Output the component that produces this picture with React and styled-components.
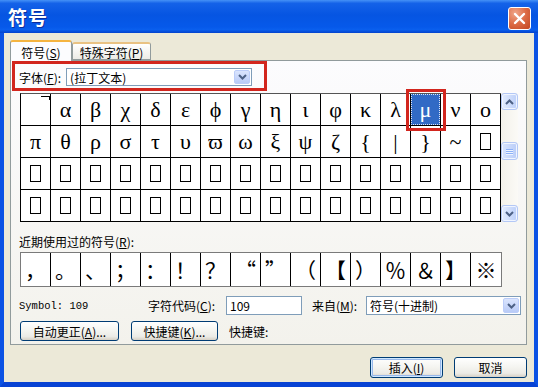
import React from "react";
import styled, { createGlobalStyle } from "styled-components";

const GlobalStyle = createGlobalStyle`
  html, body { margin: 0; padding: 0; background: #fff; }
  body {
    font-family: "Noto Sans CJK SC", "Noto Sans", sans-serif;
    font-size: 12px;
    color: #000;
  }
  * { box-sizing: border-box; }
`;

const row1 = ["macron", "α", "β", "χ", "δ", "ε", "ϕ", "γ", "η", "ι", "φ", "κ", "λ", "μ", "ν", "ο"];
const row2 = ["π", "θ", "ρ", "σ", "τ", "υ", "ϖ", "ω", "ξ", "ψ", "ζ", "{", "|", "}", "~", null];
const blanks = Array(32).fill(null);
const cells = [...row1, ...row2, ...blanks];
const recent = ["，", "。", "、", "；", "：", "！", "？", "“", "”", "（", "【", "）", "％", "＆", "】", "※"];

const Chevron = ({ up }) => (
  <svg width="9" height="6" viewBox="0 0 9 6">
    <path
      d={up ? "M1 5 L4.5 1.5 L8 5" : "M1 1 L4.5 4.5 L8 1"}
      fill="none"
      stroke="#4D6185"
      strokeWidth="2"
    />
  </svg>
);

const App = () => {
  return (
    <>
      <GlobalStyle />
      <Window>
        <TitleBar>
          <Title>符号</Title>
          <CloseButton>
            <svg width="13" height="13" viewBox="0 0 13 13">
              <path d="M2 2 L11 11 M11 2 L2 11" stroke="#fff" strokeWidth="2.4" strokeLinecap="round" />
            </svg>
          </CloseButton>
        </TitleBar>
        <Frame>
          <Body>
            <TabRow>
              <Tab $active $w={62}>
                符号(<u>S</u>)
              </Tab>
              <Tab $w={79}>
                特殊字符(<u>P</u>)
              </Tab>
            </TabRow>
            <Panel>
              <FontBox>
                <Label>
                  字体(<u>F</u>):
                </Label>
                <Select $w={186} $h={18}>
                  <span>(拉丁文本)</span>
                  <DropButton>
                    <Chevron />
                  </DropButton>
                </Select>
              </FontBox>

              <CharArea>
                <CharGrid>
                  {cells.map((c, i) => (
                    <CharCell key={i} $selected={c === "μ"}>
                      {c === "macron" ? (
                        <MacronCell>
                          <Macron />
                        </MacronCell>
                      ) : c === "μ" ? (
                        <FocusRing>μ</FocusRing>
                      ) : c ? (
                        c
                      ) : (
                        <MissingGlyph />
                      )}
                    </CharCell>
                  ))}
                </CharGrid>
                <ScrollBar>
                  <ScrollButton>
                    <Chevron up />
                  </ScrollButton>
                  <TrackGap $h={32} />
                  <Thumb>
                    <Grip />
                    <Grip />
                    <Grip />
                  </Thumb>
                  <TrackGap $grow />
                  <ScrollButton>
                    <Chevron />
                  </ScrollButton>
                </ScrollBar>
              </CharArea>

              <SectionLabel>
                近期使用过的符号(<u>R</u>):
              </SectionLabel>
              <RecentBox>
                {recent.map((c, i) => (
                  <RecentCell key={i}>{c}</RecentCell>
                ))}
              </RecentBox>

              <InfoRow>
                <SymbolName>Symbol: 109</SymbolName>
                <Label $w={76}>
                  字符代码(<u>C</u>):
                </Label>
                <CodeInput>109</CodeInput>
                <Label $w={52} $ml={10}>
                  来自(<u>M</u>):
                </Label>
                <Select $w={155} $h={19}>
                  <span>符号(十进制)</span>
                  <DropButton>
                    <Chevron />
                  </DropButton>
                </Select>
              </InfoRow>

              <ButtonRow>
                <XPButton $w={99}>
                  自动更正(<u>A</u>)...
                </XPButton>
                <XPButton $w={87}>
                  快捷键(<u>K</u>)...
                </XPButton>
                <ShortcutText>快捷键:</ShortcutText>
              </ButtonRow>
            </Panel>

            <Footer>
              <XPButton $w={73} $h={21} $focus>
                插入(<u>I</u>)
              </XPButton>
              <XPButton $w={73} $h={21}>
                取消
              </XPButton>
            </Footer>
          </Body>
        </Frame>
      </Window>
    </>
  );
};

export default App;

const Window = styled.div`
  width: 538px;
  height: 387px;
  display: flex;
  flex-direction: column;
  overflow: hidden;
`;

const TitleBar = styled.div`
  height: 33px;
  flex: none;
  display: flex;
  align-items: center;
  justify-content: space-between;
  padding: 0 7px 0 8px;
  background: linear-gradient(
    to bottom,
    #4592f7 0%,
    #1462e8 10%,
    #0655e2 45%,
    #0659ea 82%,
    #0a5fee 90%,
    #0342cc 100%
  );
`;

const Title = styled.span`
  color: #fff;
  font-size: 19px;
  font-weight: bold;
  letter-spacing: 1px;
  text-shadow: 1px 1px 0 #0c2e9c;
`;

const CloseButton = styled.div`
  width: 23px;
  height: 23px;
  margin-top: 3px;
  border: 1px solid #fff;
  border-radius: 3px;
  background: radial-gradient(circle at 30% 25%, #f0a68a 0%, #dc6b45 50%, #c2451f 100%);
  display: flex;
  align-items: center;
  justify-content: center;
`;

const Frame = styled.div`
  flex: 1;
  display: flex;
  border-left: 4px solid #0b52e4;
  border-right: 4px solid #0b52e4;
  border-bottom: 5px solid #0843d4;
`;

const Body = styled.div`
  flex: 1;
  background: #ece9d8;
  padding: 7px 7px 0 6px;
  display: flex;
  flex-direction: column;
`;

const TabRow = styled.div`
  height: 20px;
  display: flex;
  align-items: flex-end;
`;

const Tab = styled.div`
  position: relative;
  z-index: ${(p) => (p.$active ? 2 : 1)};
  width: ${(p) => p.$w}px;
  height: ${(p) => (p.$active ? 21 : 18)}px;
  margin-bottom: ${(p) => (p.$active ? -1 : 0)}px;
  display: flex;
  align-items: center;
  justify-content: center;
  padding-top: 1px;
  border: 1px solid #919b9c;
  border-top: 2px solid ${(p) => (p.$active ? "#f5b440" : "#e9c283")};
  border-bottom: ${(p) => (p.$active ? "none" : "1px solid #919b9c")};
  border-radius: 3px 3px 0 0;
  background: ${(p) =>
    p.$active ? "#fcfcfe" : "linear-gradient(to bottom, #ffffff, #ecebe6)"};
`;

const Panel = styled.div`
  height: 285px;
  border: 1px solid #919b9c;
  background: linear-gradient(to bottom, #fcfcfe, #f3f2ec);
  padding-left: 1px;
  display: flex;
  flex-direction: column;
  align-items: flex-start;
`;

const FontBox = styled.div`
  width: 255px;
  height: 30px;
  border: 3px solid #d2261e;
  display: flex;
  align-items: center;
  gap: 3px;
  padding: 2px 0 0 4px;
`;

const Label = styled.span`
  flex: none;
  width: ${(p) => (p.$w ? `${p.$w}px` : "auto")};
  margin-left: ${(p) => p.$ml || 0}px;
  white-space: nowrap;
`;

const Select = styled.div`
  flex: none;
  width: ${(p) => p.$w}px;
  height: ${(p) => p.$h}px;
  margin-left: 2px;
  border: 1px solid #7f9db9;
  background: #fff;
  display: flex;
  align-items: center;
  justify-content: space-between;
  padding: 0 1px 0 3px;
  white-space: nowrap;
`;

const DropButton = styled.div`
  width: 16px;
  height: calc(100% - 2px);
  border: 1px solid #bccdf9;
  border-radius: 2px;
  background: linear-gradient(to bottom, #dbe5fd, #b9cbf7);
  display: flex;
  align-items: center;
  justify-content: center;
`;

const CharArea = styled.div`
  display: flex;
  margin: 2px 0 0 8px;
`;

const CharGrid = styled.div`
  display: grid;
  grid-template-columns: repeat(16, 30px);
  grid-auto-rows: 32px;
  border-top: 1px solid #555;
  border-left: 1px solid #000;
  background: #fff;
`;

const CharCell = styled.div`
  position: relative;
  z-index: ${(p) => (p.$selected ? 1 : 0)};
  display: flex;
  align-items: center;
  justify-content: center;
  border-right: 1px solid #000;
  border-bottom: 1px solid #000;
  font-family: "Liberation Serif", "DejaVu Serif", serif;
  font-size: 22px;
  line-height: 1;
  background: ${(p) => (p.$selected ? "#316ac5" : "#fff")};
  color: ${(p) => (p.$selected ? "#fff" : "#000")};
  outline: ${(p) => (p.$selected ? "3px solid #d2261e" : "none")};
  outline-offset: 2px;
`;

const FocusRing = styled.span`
  width: 100%;
  height: 100%;
  display: flex;
  align-items: center;
  justify-content: center;
  border: 1px dotted #dfe6f5;
`;

const MacronCell = styled.span`
  width: 100%;
  height: 100%;
  display: flex;
  justify-content: flex-end;
  align-items: flex-start;
  padding-top: 2px;
`;

const Macron = styled.span`
  width: 9px;
  height: 4px;
  border-top: 1px solid #000;
  border-right: 1px solid #000;
`;

const MissingGlyph = styled.span`
  width: 11px;
  height: 17px;
  border: 1px solid #000;
`;

const ScrollBar = styled.div`
  width: 17px;
  display: flex;
  flex-direction: column;
  background: linear-gradient(to right, #f3f1ea, #fbfaf6);
`;

const ScrollButton = styled.div`
  height: 17px;
  flex: none;
  border: 1px solid #b4c8f6;
  border-radius: 3px;
  background: linear-gradient(to right, #e2ebfe, #bdd0f9);
  box-shadow: inset 0 0 0 1px #f0f5ff;
  display: flex;
  align-items: center;
  justify-content: center;
`;

const TrackGap = styled.div`
  flex: ${(p) => (p.$grow ? 1 : "none")};
  height: ${(p) => (p.$h ? `${p.$h}px` : "auto")};
`;

const Thumb = styled.div`
  height: 18px;
  flex: none;
  border: 1px solid #b4c8f6;
  border-radius: 3px;
  background: linear-gradient(to right, #d8e4fe, #bacdf8);
  box-shadow: inset 0 0 0 1px #f0f5ff;
  display: flex;
  flex-direction: column;
  align-items: center;
  justify-content: center;
  gap: 1px;
`;

const Grip = styled.span`
  width: 7px;
  height: 1px;
  background: #8cb0f8;
  box-shadow: 0 1px 0 #eef4fe;
`;

const SectionLabel = styled.div`
  margin: 11px 0 0 7px;
  height: 18px;
  line-height: 18px;
`;

const RecentBox = styled.div`
  display: grid;
  grid-template-columns: repeat(16, 30px);
  height: 35px;
  margin: 1px 0 0 8px;
  border: 1px solid #7a7a7a;
  background: #fff;
`;

const RecentCell = styled.div`
  display: flex;
  align-items: center;
  justify-content: center;
  border-right: 1px solid #000;
  font-family: "Noto Sans CJK SC", sans-serif;
  font-size: 21px;
  line-height: 1;

  &:last-child {
    border-right: none;
  }
`;

const InfoRow = styled.div`
  display: flex;
  align-items: center;
  height: 19px;
  margin: 9px 0 0 7px;
`;

const SymbolName = styled.span`
  width: 129px;
  flex: none;
  font-family: "Liberation Mono", "DejaVu Sans Mono", monospace;
  font-size: 10.5px;
`;

const CodeInput = styled.div`
  width: 76px;
  height: 19px;
  margin-left: 2px;
  border: 1px solid #7f9db9;
  background: #fff;
  padding-left: 3px;
  display: flex;
  align-items: center;
`;

const ButtonRow = styled.div`
  display: flex;
  align-items: center;
  gap: 12px;
  margin: 6px 0 0 8px;
`;

const XPButton = styled.div`
  width: ${(p) => p.$w}px;
  height: ${(p) => p.$h || 20}px;
  border: 1px solid #003c74;
  border-radius: 3px;
  background: linear-gradient(to bottom, #ffffff 0%, #f5f5f1 45%, #ecebe6 80%, #d6d0c5 100%);
  box-shadow: ${(p) =>
    p.$focus ? "inset 0 0 0 1px #cee7ff, inset 0 0 0 2px #98b8ea" : "none"};
  display: flex;
  align-items: center;
  justify-content: center;
  white-space: nowrap;
`;

const ShortcutText = styled.span`
  margin-left: -1px;
`;

const Footer = styled.div`
  display: flex;
  justify-content: flex-end;
  gap: 11px;
  margin-top: 12px;
`;
